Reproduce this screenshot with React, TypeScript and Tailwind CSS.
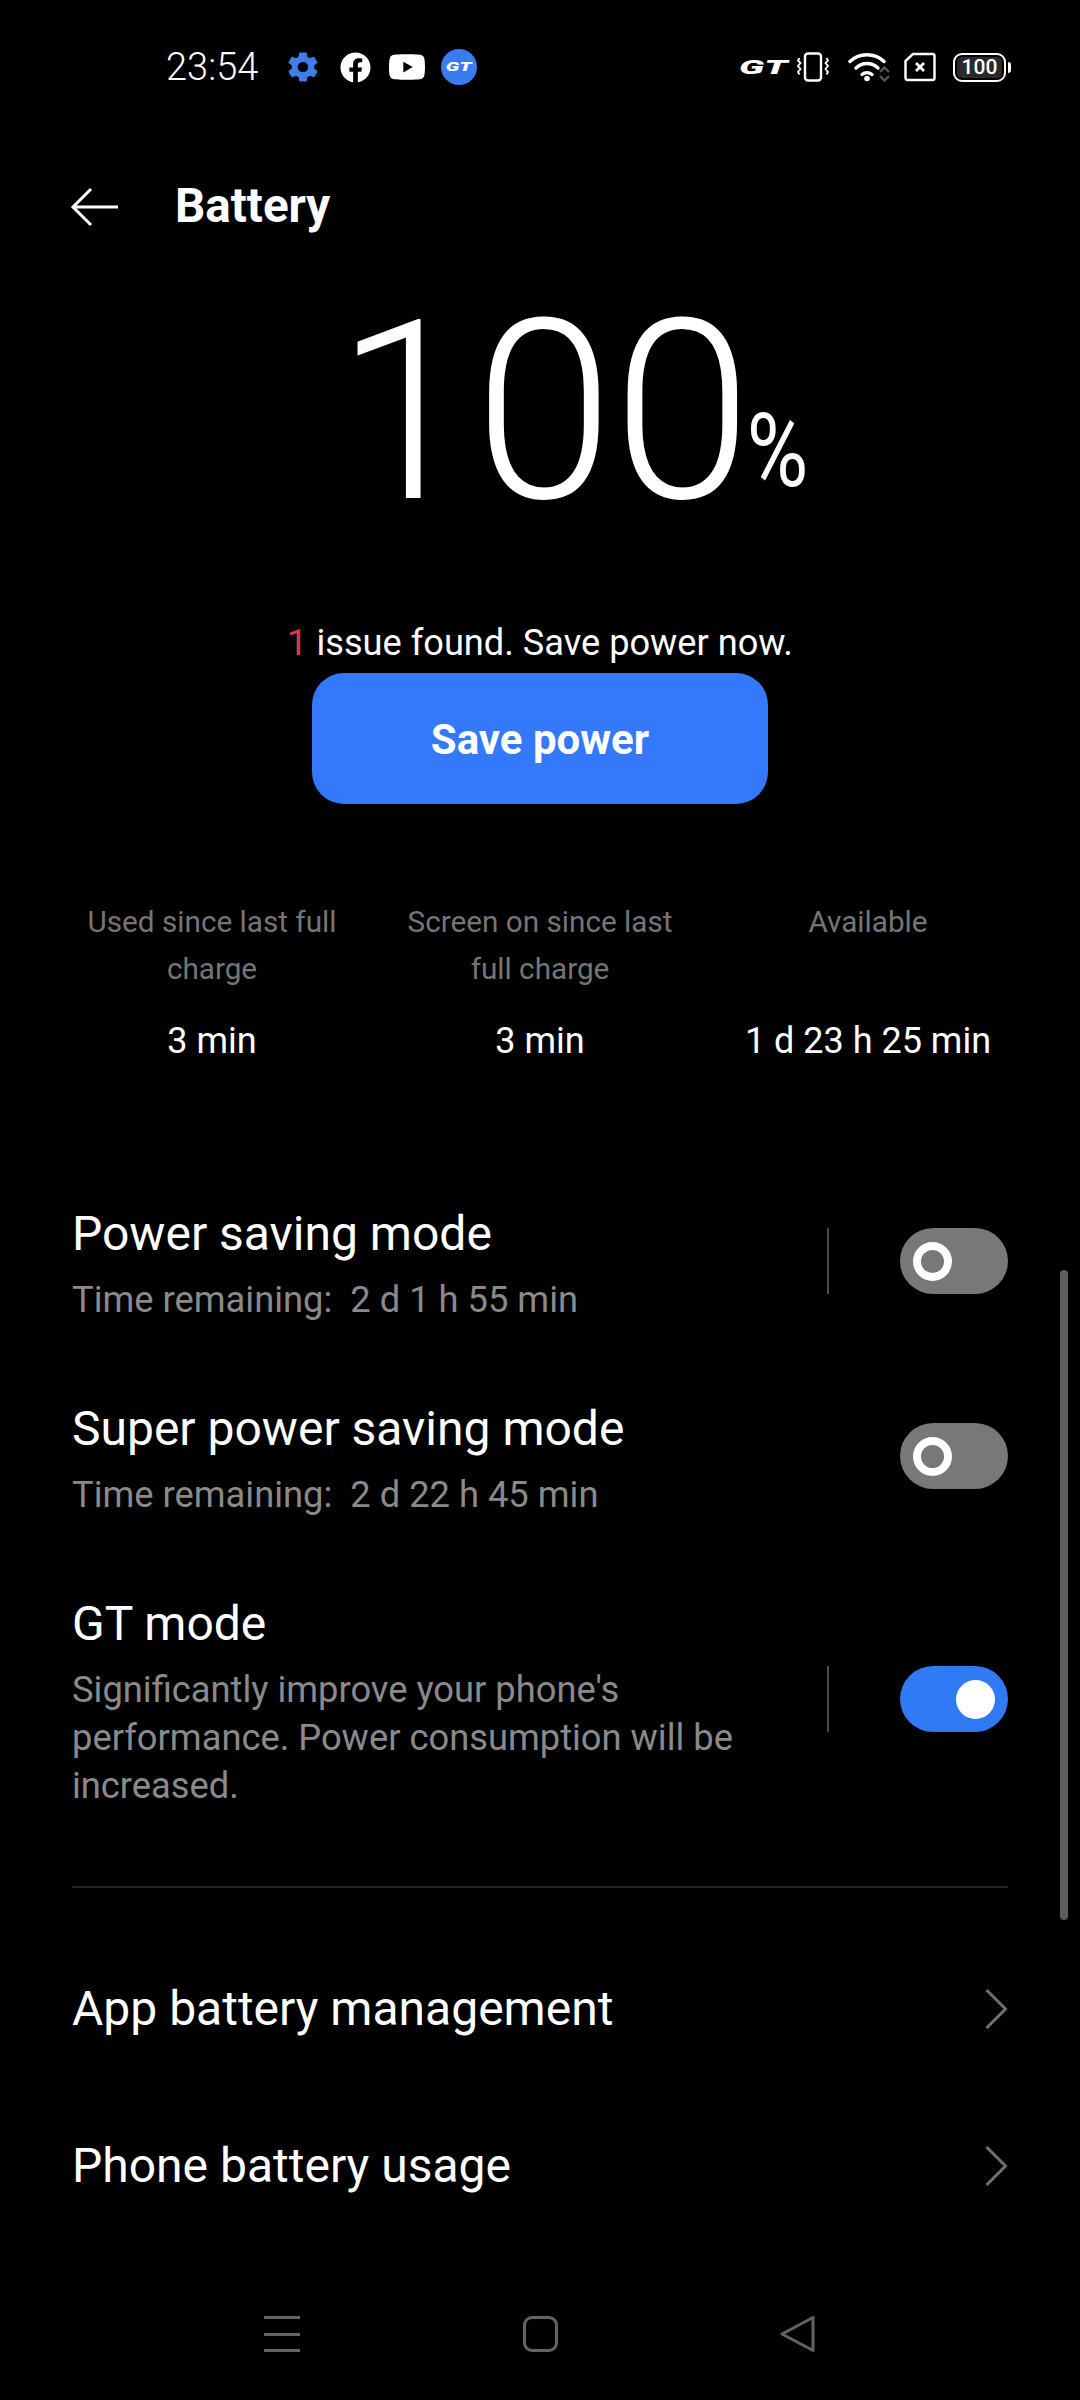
import { FaFacebook, FaYoutube } from 'react-icons/fa'
import { IoMdSettings } from 'react-icons/io'

function GtMark({ className }: { className: string }) {
  return <span className={`font-['Roboto',sans-serif] font-black italic leading-none ${className}`}>GT</span>
}

function VibrateIcon() {
  return (
    <svg width="32" height="30" viewBox="0 0 32 30" fill="none" stroke="white">
      <rect x="8" y="1.5" width="16" height="27" rx="3" strokeWidth="2.4" />
      <path d="M2.5 6l-1.5 2.5 2.5 2.5-2.5 3 2.5 3-2.5 3 1.5 2.5M29.5 6l1.5 2.5-2.5 2.5 2.5 3-2.5 3 2.5 3-1.5 2.5" strokeWidth="1.8" />
    </svg>
  )
}

function WifiIcon() {
  return (
    <svg width="42" height="30" viewBox="0 0 42 30" fill="none">
      <g stroke="white" strokeWidth="3.4" strokeLinecap="round">
        <path d="M2 9.5C11.5 .5 26.5 .5 36 9.5" />
        <path d="M8 16C14.5 10 23.500 10 30 16" />
        <path d="M14 22.500C17 20 21 20 24 22.500" />
      </g>
      <circle cx="19" cy="26.500" r="2.800" fill="white" />
      <path d="M32 20l4.500-4.500 4.500 4.500" stroke="#555" strokeWidth="2.400" />
      <path d="M32 24l4.500 4.500 4.500-4.500" stroke="#555" strokeWidth="2.400" />
    </svg>
  )
}

function SimIcon() {
  return (
    <svg width="32" height="30" viewBox="0 0 32 30" fill="none" stroke="white">
      <path d="M9 2H28.500a2 2 0 0 1 2 2v22a2 2 0 0 1-2 2H3.500a2 2 0 0 1-2-2V9z" strokeWidth="2.400" strokeLinejoin="round" />
      <path d="M12 11l8 8M20 11l-8 8" strokeWidth="2.800" />
    </svg>
  )
}

function StatusBar() {
  return (
    <div className="flex h-[134px] items-center pl-[166px] pr-[69px] text-white">
      <span className="w-[122px] text-[38px] font-light leading-none">23:54</span>
      <IoMdSettings className="h-[36px] w-[36px] -ml-[3px] text-[#3f7de8]" />
      <FaFacebook className="ml-[19px] h-[31px] w-[31px]" />
      <FaYoutube className="ml-[17px] h-[40px] w-[38px]" />
      <div className="ml-[15px] flex h-[36px] w-[36px] items-center justify-center rounded-full bg-[#3a7cf0]">
        <GtMark className="scale-x-[1.7] text-[12px] text-white" />
      </div>
      <GtMark className="ml-auto origin-right scale-x-[1.9] text-[20px] text-white" />
      <div className="ml-[10px]"><VibrateIcon /></div>
      <div className="ml-[19px]"><WifiIcon /></div>
      <div className="ml-[14px]"><SimIcon /></div>
      <div className="ml-[17px] flex items-center">
        <div className="flex h-[29px] w-[53px] items-center justify-center rounded-[9px] border-[2.5px] border-white p-[2px]">
          <div className="flex h-full w-full items-center justify-center rounded-[5px] bg-[#2a2a2a] text-[21px] font-medium leading-none">100</div>
        </div>
        <div className="ml-[2px] h-[11px] w-[3px] rounded-r-sm bg-white" />
      </div>
    </div>
  )
}

function Toggle({ on }: { on?: boolean }) {
  if (on) {
    return (
      <div className="flex h-[66px] w-[108px] items-center justify-end rounded-full bg-[#2f7bf6] pr-[13px]">
        <div className="h-[39px] w-[39px] rounded-full bg-white" />
      </div>
    )
  }
  return (
    <div className="flex h-[66px] w-[108px] items-center rounded-full bg-[#787878] pl-[13px]">
      <div className="h-[39px] w-[39px] rounded-full border-[8px] border-white" />
    </div>
  )
}

function ModeRow({ title, sub, on, divider, className = '' }: { title: string; sub: string; on?: boolean; divider?: boolean; className?: string }) {
  return (
    <div className={`flex items-center ${className}`}>
      <div className="w-[700px]">
        <div className="text-[48px] leading-[60px] text-white">{title}</div>
        <div className="mt-[12px] whitespace-pre-wrap text-[36.3px] leading-[48px] text-[#8a8a8a]">{sub}</div>
      </div>
      {divider && <div className="mb-[6px] ml-[55px] h-[66px] w-[2px] bg-[#4a4a4a]" />}
      <div className="mb-[6px] ml-auto"><Toggle on={on} /></div>
    </div>
  )
}

function LinkRow({ label, className }: { label: string; className: string }) {
  return (
    <div className={`flex h-[60px] items-center justify-between ${className}`}>
      <span className="text-[48px] text-white">{label}</span>
      <svg width="23" height="40" viewBox="0 0 23 40" fill="none" stroke="#707070" strokeWidth="3">
        <path d="M1.500 1l19 19-19 19" />
      </svg>
    </div>
  )
}

const stats = [
  { label: 'Used since last full\ncharge', value: '3 min' },
  { label: 'Screen on since last\nfull charge', value: '3 min' },
  { label: 'Available', value: '1 d 23 h 25 min' },
]

export default function App() {
  return (
    <div className="relative h-[2400px] w-[1080px] overflow-hidden bg-black font-['Roboto',sans-serif]">
      <StatusBar />

      {/* header */}
      <div className="mt-[37px] flex h-[72px] items-center pl-[70px]">
        <svg width="50" height="40" viewBox="0 0 50 40" fill="none" stroke="white" strokeWidth="3">
          <path d="M48 20H3M21 2L3 20l18 18" />
        </svg>
        <span className="ml-[55px] text-[47.5px] font-bold text-white">Battery</span>
      </div>

      {/* big percent, last digit pulled tight so the % sits close */}
      <div className="mt-[40px] flex h-[260px] items-end justify-center pl-[64px]">
        <span className="text-[250px] font-light leading-[260px] text-white">
          10<span className="tracking-[-5px]">0</span>
        </span>
        <span className="mb-[40px] origin-bottom scale-y-[1.22] text-[84px] font-normal leading-none text-white">%</span>
      </div>

      <p className="mt-[78px] whitespace-pre-wrap text-center text-[36.2px] leading-[44px] text-white">
        <span className="text-[#e0364c]">1</span> issue found. Save power now.
      </p>
      <div className="mt-[8px] flex justify-center">
        <div className="flex h-[131px] w-[456px] items-center justify-center rounded-[32px] bg-[#3478fb] pt-[2px] text-[42px] font-bold text-white">
          Save power
        </div>
      </div>

      <div className="mt-[94px] grid grid-cols-3 px-[48px] text-center">
        {stats.map((s) => (
          <div key={s.value + s.label}>
            <div className="h-[94px] whitespace-pre-line text-[29.7px] leading-[47px] text-[#757575]">{s.label}</div>
            <div className="mt-[26px] text-[36px] leading-[46px] text-white">{s.value}</div>
          </div>
        ))}
      </div>

      <div className="mt-[140px] px-[72px]">
        <ModeRow title="Power saving mode" sub={'Time remaining:  2 d 1 h 55 min'} divider />
        <ModeRow className="mt-[75px]" title="Super power saving mode" sub={'Time remaining:  2 d 22 h 45 min'} />
        <ModeRow
          className="mt-[75px]"
          title="GT mode"
          sub={"Significantly improve your phone's performance. Power consumption will be increased."}
          on
          divider
        />
        <div className="mt-[76px] h-[2px] bg-[#262626]" />
        <LinkRow className="mt-[91px]" label="App battery management" />
        <LinkRow className="mt-[97px]" label="Phone battery usage" />
      </div>

      {/* scrollbar */}
      <div className="absolute left-[1060px] top-[1270px] h-[650px] w-[8px] rounded-full bg-[#5c5c5c]" />

      {/* nav bar */}
      <div className="absolute bottom-[48px] left-0 right-0 flex justify-center">
        <div className="flex w-[552px] items-center justify-between">
          <div className="flex h-[36px] w-[36px] flex-col justify-between">
            <div className="h-[3px] bg-[#636363]" />
            <div className="h-[3px] bg-[#636363]" />
            <div className="h-[3px] bg-[#636363]" />
          </div>
          <div className="h-[36px] w-[35px] rounded-[9px] border-[3px] border-[#636363]" />
          <svg width="36" height="36" viewBox="0 0 36 36" fill="none" stroke="#636363" strokeWidth="3" strokeLinejoin="round">
            <path d="M2 18L33 1.500V34.500z" />
          </svg>
        </div>
      </div>
    </div>
  )
}
